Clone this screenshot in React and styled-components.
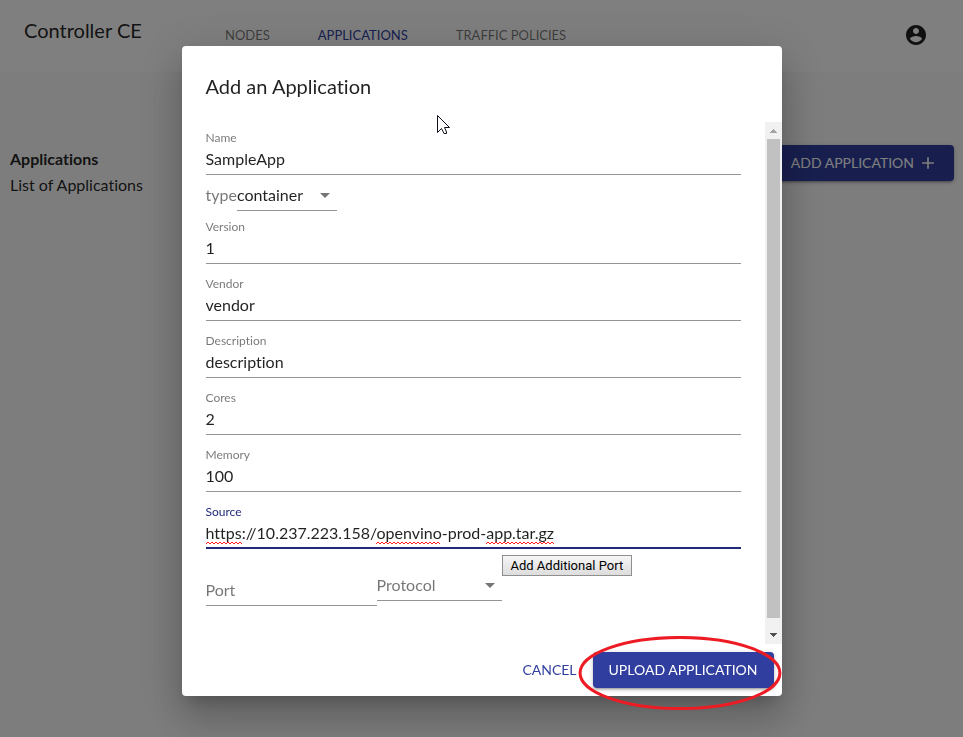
import React, { useState } from "react";
import styled, { createGlobalStyle, css } from "styled-components";

const GlobalStyle = createGlobalStyle`
  *, *::before, *::after { box-sizing: border-box; }
  html, body { margin: 0; height: 100%; }
  body {
    background: #fafafa;
    color: rgba(0, 0, 0, 0.87);
    font-family: Lato, "Open Sans", sans-serif;
    font-size: 16px;
    font-variant-ligatures: none;
    overflow: hidden;
  }
  button, input, select { font-family: inherit; font-variant-ligatures: inherit; margin: 0; }
`;

/* ---------- page behind the dialog ---------- */

const AppHeader = styled.header`
  display: flex;
  align-items: flex-start;
  height: 73px;
  padding: 0 24px;
  background: #ffffff;
  border-bottom: 1px solid #f7f7f7;
`;

const Brand = styled.h1`
  flex: none;
  width: 177px;
  margin: 0;
  padding-top: 18px;
  font-size: 20px;
  line-height: 24px;
  font-weight: 400;
`;

const Nav = styled.nav`
  display: flex;
  flex: 1;
  padding-top: 23px;
`;

const NavLink = styled.a`
  padding: 0 24px;
  font-size: 13px;
  line-height: 24px;
  text-decoration: none;
  text-transform: uppercase;
  color: ${(p) => (p.$active ? "#303f9f" : "rgba(0, 0, 0, 0.54)")};
`;

const AccountButton = styled.button`
  display: flex;
  padding: 12px;
  margin: 11px -1px 0 0;
  border: 0;
  border-radius: 50%;
  background: none;
  color: #212121;
`;

const Main = styled.main`
  display: flex;
  justify-content: space-between;
  align-items: flex-start;
  padding: 72px 9px 0 10px;
`;

const Side = styled.section`
  line-height: 26px;
  padding-top: 1px;
`;

const SideTitle = styled.h2`
  margin: 0;
  font-size: 16px;
  font-weight: 700;
`;

const SideText = styled.p`
  margin: 0;
`;

const buttonBase = css`
  display: inline-flex;
  align-items: center;
  justify-content: center;
  height: 36px;
  border: 0;
  border-radius: 4px;
  font-size: 14px;
  line-height: 24px;
  text-transform: uppercase;
  white-space: nowrap;
`;

const ContainedButton = styled.button`
  ${buttonBase}
  gap: 4px;
  padding: 0 16px;
  background: #303f9f;
  color: #ffffff;
  box-shadow: 0 1px 5px rgba(0, 0, 0, 0.2), 0 2px 2px rgba(0, 0, 0, 0.14),
    0 3px 1px -2px rgba(0, 0, 0, 0.12);
`;

const TextButton = styled.button`
  ${buttonBase}
  padding: 0 8px;
  background: none;
  color: #303f9f;
`;

/* ---------- dialog ---------- */

const Backdrop = styled.div`
  position: fixed;
  inset: 0;
  display: flex;
  justify-content: center;
  align-items: flex-start;
  padding: 46px 48px 40px;
  background: rgba(0, 0, 0, 0.5);
`;

const Dialog = styled.form`
  position: relative;
  display: flex;
  flex-direction: column;
  width: 100%;
  max-width: 600px;
  background: #ffffff;
  border-radius: 4px;
  box-shadow: 0 11px 15px -7px rgba(0, 0, 0, 0.2),
    0 24px 38px 3px rgba(0, 0, 0, 0.14), 0 9px 46px 8px rgba(0, 0, 0, 0.12);
`;

const DialogTitle = styled.h2`
  margin: 0;
  padding: 24px 24px 20px;
  font-size: 20px;
  line-height: 32px;
  font-weight: 400;
`;

const ScrollArea = styled.div`
  display: flex;
`;

const Fields = styled.div`
  display: flex;
  flex-direction: column;
  flex: 1;
  min-width: 0;
  padding: 0 24px 38px;
`;

const Field = styled.div`
  position: relative;
  margin: 8px 0 4px;
`;

const FieldLabel = styled.label`
  display: block;
  font-size: 12px;
  line-height: 16px;
  color: ${(p) => (p.$focused ? "#202a78" : "rgba(0, 0, 0, 0.54)")};
`;

const TextInput = styled.input`
  display: block;
  width: 100%;
  height: 29px;
  padding: ${(p) => (p.$focused ? "0 0 3px" : "0 0 4px")};
  border: 0;
  border-bottom: ${(p) => (p.$focused ? "2px solid #202a78" : "1px solid #949494")};
  border-radius: 0;
  outline: 0;
  background: none;
  font-size: 16px;
  color: rgba(0, 0, 0, 0.87);

  &::placeholder {
    color: rgba(0, 0, 0, 0.54);
    opacity: 1;
  }
`;

const SpellMarks = styled.svg`
  position: absolute;
  left: 0;
  bottom: 4px;
  width: 348px;
  height: 4px;
  pointer-events: none;
`;

const TypeRow = styled.div`
  display: flex;
  align-items: flex-start;
`;

const TypeLabel = styled.label`
  line-height: 32px;
  color: rgba(0, 0, 0, 0.54);
`;

const SelectBox = styled.div`
  display: grid;
  align-items: center;
  width: ${(p) => p.$width};
  height: 32px;
  border-bottom: 1px solid #949494;

  > * { grid-area: 1 / 1; }

  > svg {
    justify-self: end;
    pointer-events: none;
    color: #757575;
  }
`;

const Select = styled.select`
  appearance: none;
  width: 100%;
  height: 31px;
  padding: 0 24px 0 0;
  border: 0;
  outline: 0;
  background: none;
  font-size: 16px;
  color: ${(p) => (p.$empty ? "rgba(0, 0, 0, 0.54)" : "rgba(0, 0, 0, 0.87)")};
`;

const PortRow = styled.div`
  display: flex;
  align-items: flex-end;
`;

const PortCell = styled.div`
  width: 171px;
  padding-top: 24px;
`;

const ProtocolCell = styled.div`
  padding-bottom: 5px;
`;

const NativeButton = styled.button`
  align-self: flex-start;
  height: 21px;
  margin-top: 2px;
  padding: 0 8px;
  border: 1px solid #8f8f8f;
  border-radius: 0;
  background: linear-gradient(#f6f6f6, #dddddd);
  && { font-family: Roboto, "Liberation Sans", sans-serif; }
  font-size: 13px;
  line-height: 18px;
  color: #000000;
  white-space: nowrap;
`;

const ScrollBar = styled.div`
  display: flex;
  flex-direction: column;
  flex: none;
  width: 17px;
  background: #f1f1f1;
`;

const ScrollArrow = styled.svg`
  flex: none;
  width: 17px;
  height: 17px;
  fill: ${(p) => (p.$dim ? "#a3a3a3" : "#505050")};
`;

const ScrollThumb = styled.div`
  flex: 1;
  margin: 0 2px 9px;
  background: #c1c1c1;
`;

const Actions = styled.div`
  display: flex;
  justify-content: flex-end;
  gap: 8px;
  padding: 8px;
`;

const Circled = styled.div`
  position: relative;
`;

const Ring = styled.svg`
  position: absolute;
  left: -15px;
  top: -16px;
  width: calc(100% + 23px);
  height: 74px;
  pointer-events: none;
`;

const Pointer = styled.svg`
  position: absolute;
  left: 255px;
  top: 69px;
  width: 13px;
  height: 20px;
  pointer-events: none;
`;

const AccountIcon = () => (
  <svg width="24" height="24" viewBox="0 0 24 24" fill="currentColor" aria-hidden="true">
    <path d="M12 2C6.48 2 2 6.48 2 12s4.48 10 10 10 10-4.48 10-10S17.52 2 12 2zm0 3c1.66 0 3 1.34 3 3s-1.34 3-3 3-3-1.34-3-3 1.34-3 3-3zm0 14.2c-2.5 0-4.71-1.28-6-3.22.03-1.99 4-3.08 6-3.08 1.99 0 5.97 1.09 6 3.08-1.29 1.94-3.5 3.22-6 3.22z" />
  </svg>
);

const AddIcon = () => (
  <svg width="20" height="20" viewBox="0 0 24 24" fill="currentColor" aria-hidden="true">
    <path d="M19 13h-6v6h-2v-6H5v-2h6V5h2v6h6v2z" />
  </svg>
);

const DropIcon = () => (
  <svg width="24" height="24" viewBox="0 0 24 24" fill="currentColor" aria-hidden="true">
    <path d="M7 10l5 5 5-5z" />
  </svg>
);

const wave = (from, to) => {
  let d = `M${from} 3`;
  for (let x = from + 2, up = true; x <= to; x += 2, up = !up) d += `L${x} ${up ? 1 : 3}`;
  return d;
};

function LabeledInput({ id, label, value, focused, children }) {
  const [text, setText] = useState(value);
  return (
    <Field>
      <FieldLabel htmlFor={id} $focused={focused}>{label}</FieldLabel>
      <TextInput
        id={id}
        type="text"
        spellCheck={false}
        value={text}
        $focused={focused}
        onChange={(e) => setText(e.target.value)}
      />
      {children}
    </Field>
  );
}

const details = [
  ["version", "Version", "1"],
  ["vendor", "Vendor", "vendor"],
  ["description", "Description", "description"],
  ["cores", "Cores", "2"],
  ["memory", "Memory", "100"],
];

export default function App() {
  const [protocol, setProtocol] = useState("");
  return (
    <>
      <GlobalStyle />
      <AppHeader>
        <Brand>Controller CE</Brand>
        <Nav>
          <NavLink href="#nodes">Nodes</NavLink>
          <NavLink href="#applications" $active>Applications</NavLink>
          <NavLink href="#policies">Traffic Policies</NavLink>
        </Nav>
        <AccountButton type="button" aria-label="Account">
          <AccountIcon />
        </AccountButton>
      </AppHeader>
      <Main>
        <Side>
          <SideTitle>Applications</SideTitle>
          <SideText>List of Applications</SideText>
        </Side>
        <ContainedButton type="button">
          Add Application
          <AddIcon />
        </ContainedButton>
      </Main>

      <Backdrop>
        <Dialog role="dialog" aria-labelledby="dialog-title" onSubmit={(e) => e.preventDefault()}>
          <DialogTitle id="dialog-title">Add an Application</DialogTitle>
          <ScrollArea>
            <Fields>
              <LabeledInput id="name" label="Name" value="SampleApp" />
              <TypeRow>
                <TypeLabel htmlFor="type">type</TypeLabel>
                <SelectBox $width="100px">
                  <Select id="type" defaultValue="container">
                    <option value="container">container</option>
                    <option value="vm">vm</option>
                  </Select>
                  <DropIcon />
                </SelectBox>
              </TypeRow>
              {details.map(([id, label, value]) => (
                <LabeledInput key={id} id={id} label={label} value={value} />
              ))}
              <LabeledInput
                id="source"
                label="Source"
                value="https://10.237.223.158/openvino-prod-app.tar.gz"
                focused
              >
                <SpellMarks viewBox="0 0 348 4" fill="none" stroke="#ff2020" aria-hidden="true">
                  <path d={wave(0, 37)} />
                  <path d={wave(170, 235)} />
                  <path d={wave(280, 348)} />
                </SpellMarks>
              </LabeledInput>
              <PortRow>
                <PortCell>
                  <TextInput type="text" placeholder="Port" aria-label="Port" />
                </PortCell>
                <ProtocolCell>
                  <SelectBox $width="125px">
                    <Select
                      aria-label="Protocol"
                      value={protocol}
                      $empty={!protocol}
                      onChange={(e) => setProtocol(e.target.value)}
                    >
                      <option value="">Protocol</option>
                      <option value="tcp">tcp</option>
                      <option value="udp">udp</option>
                    </Select>
                    <DropIcon />
                  </SelectBox>
                </ProtocolCell>
                <NativeButton type="button">Add Additional Port</NativeButton>
              </PortRow>
            </Fields>
            <ScrollBar aria-hidden="true">
              <ScrollArrow viewBox="0 0 17 17" shapeRendering="crispEdges" $dim>
                <path d="M5 11h7v-1h-1v-1h-1v-1h-1v-1h-1v1h-1v1h-1v1h-1z" />
              </ScrollArrow>
              <ScrollThumb />
              <ScrollArrow viewBox="0 0 17 17" shapeRendering="crispEdges">
                <path d="M5 6h7v1h-1v1h-1v1h-1v1h-1v-1h-1v-1h-1v-1h-1z" />
              </ScrollArrow>
            </ScrollBar>
          </ScrollArea>
          <Actions>
            <TextButton type="button">Cancel</TextButton>
            <Circled>
              <ContainedButton type="submit">Upload Application</ContainedButton>
              <Ring aria-hidden="true">
                <ellipse
                  cx="50%"
                  cy="50%"
                  rx="49%"
                  ry="48%"
                  fill="none"
                  stroke="#ed1c24"
                  strokeWidth="3"
                />
              </Ring>
            </Circled>
          </Actions>
          <Pointer viewBox="0 0 13 20" aria-hidden="true">
            <path
              d="M0.5 0.5V17.5L4.5 13.5L7 18.5H9.5V17L7.5 12.5H12.5Z"
              fill="#ffffff"
              stroke="#10101c"
            />
          </Pointer>
        </Dialog>
      </Backdrop>
    </>
  );
}
